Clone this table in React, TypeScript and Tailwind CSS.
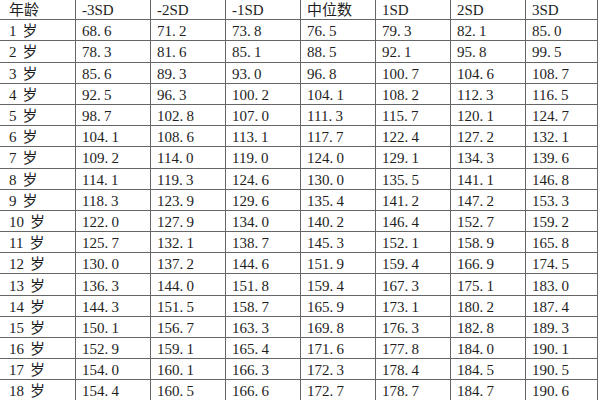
import React from 'react';

const headers = ['年龄', '-3SD', '-2SD', '-1SD', '中位数', '1SD', '2SD', '3SD'];

const rows: string[][] = [
  ['68.6', '71.2', '73.8', '76.5', '79.3', '82.1', '85.0'],
  ['78.3', '81.6', '85.1', '88.5', '92.1', '95.8', '99.5'],
  ['85.6', '89.3', '93.0', '96.8', '100.7', '104.6', '108.7'],
  ['92.5', '96.3', '100.2', '104.1', '108.2', '112.3', '116.5'],
  ['98.7', '102.8', '107.0', '111.3', '115.7', '120.1', '124.7'],
  ['104.1', '108.6', '113.1', '117.7', '122.4', '127.2', '132.1'],
  ['109.2', '114.0', '119.0', '124.0', '129.1', '134.3', '139.6'],
  ['114.1', '119.3', '124.6', '130.0', '135.5', '141.1', '146.8'],
  ['118.3', '123.9', '129.6', '135.4', '141.2', '147.2', '153.3'],
  ['122.0', '127.9', '134.0', '140.2', '146.4', '152.7', '159.2'],
  ['125.7', '132.1', '138.7', '145.3', '152.1', '158.9', '165.8'],
  ['130.0', '137.2', '144.6', '151.9', '159.4', '166.9', '174.5'],
  ['136.3', '144.0', '151.8', '159.4', '167.3', '175.1', '183.0'],
  ['144.3', '151.5', '158.7', '165.9', '173.1', '180.2', '187.4'],
  ['150.1', '156.7', '163.3', '169.8', '176.3', '182.8', '189.3'],
  ['152.9', '159.1', '165.4', '171.6', '177.8', '184.0', '190.1'],
  ['154.0', '160.1', '166.3', '172.3', '178.4', '184.5', '190.5'],
  ['154.4', '160.5', '166.6', '172.7', '178.7', '184.7', '190.6'],
];

// half-width period like the Song font in the source
const Num = ({ value }: { value: string }) => {
  const [a, b] = value.split('.');
  return (
    <>
      {a}
      <span className="inline-block w-[7px]">.</span>
      {b}
    </>
  );
};

const cell = 'h-[21.2px] border border-[#666] p-0 pl-[6px] pt-[2px] text-left align-middle whitespace-nowrap';

export default function App() {
  return (
    <div
      className="h-[400px] w-[600px] overflow-hidden bg-white text-[15px] leading-[16px] text-[#1e1e1e]"
      style={{ fontFamily: '"Liberation Serif", "Noto Sans CJK SC", serif' }}
    >
      <table className="-ml-[1px] -mt-[2px] table-fixed border-collapse">
        <colgroup>
          <col className="w-[76px]" />
          <col className="w-[75px]" />
          <col className="w-[75px]" />
          <col className="w-[75px]" />
          <col className="w-[75px]" />
          <col className="w-[75px]" />
          <col className="w-[75px]" />
          <col className="w-[72px]" />
        </colgroup>
        <thead>
          <tr>
            {headers.map((h, i) => (
              <th key={h} className={`${cell} font-normal ${i === 0 ? 'pl-[9px]' : ''}`}>
                {h}
              </th>
            ))}
          </tr>
        </thead>
        <tbody>
          {rows.map((r, i) => (
            <tr key={i}>
              <td className={`${cell} pl-[9px]`}>
                {i + 1}
                <span className="ml-[6px]">岁</span>
              </td>
              {r.map((v, j) => (
                <td key={j} className={cell}>
                  <Num value={v} />
                </td>
              ))}
            </tr>
          ))}
        </tbody>
      </table>
    </div>
  );
}
